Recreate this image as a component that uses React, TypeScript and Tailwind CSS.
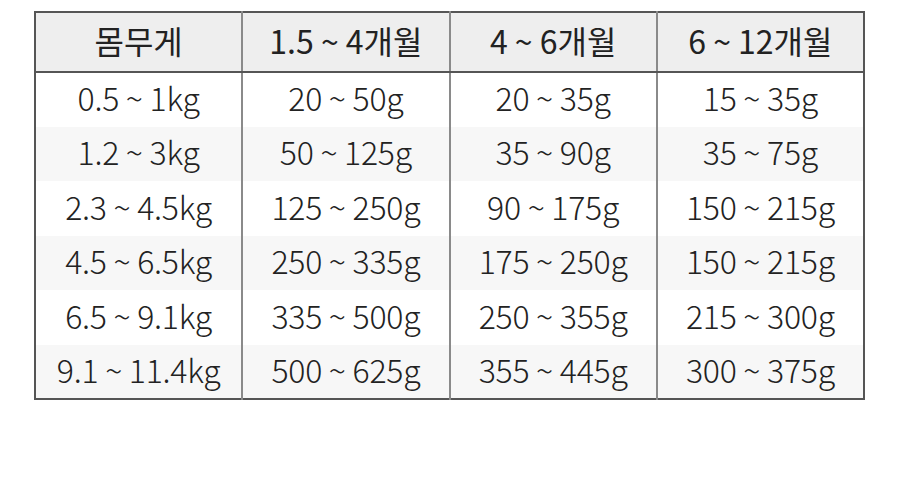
import React from "react";

const headers = ["몸무게", "1.5 ~ 4개월", "4 ~ 6개월", "6 ~ 12개월"];

const rows: string[][] = [
  ["0.5 ~ 1kg", "20 ~ 50g", "20 ~ 35g", "15 ~ 35g"],
  ["1.2 ~ 3kg", "50 ~ 125g", "35 ~ 90g", "35 ~ 75g"],
  ["2.3 ~ 4.5kg", "125 ~ 250g", "90 ~ 175g", "150 ~ 215g"],
  ["4.5 ~ 6.5kg", "250 ~ 335g", "175 ~ 250g", "150 ~ 215g"],
  ["6.5 ~ 9.1kg", "335 ~ 500g", "250 ~ 355g", "215 ~ 300g"],
  ["9.1 ~ 11.4kg", "500 ~ 625g", "355 ~ 445g", "300 ~ 375g"],
];

export default function App() {
  return (
    <div
      className="w-[900px] h-[484px] bg-white pt-[11px] pl-[34px]"
      style={{ fontFamily: '"Noto Sans CJK KR", "Noto Sans", sans-serif' }}
    >
      <table className="w-[831px] border-collapse border-2 border-[#555555] text-[#222222] table-fixed">
        <thead>
          <tr className="bg-[#eeeeee] h-[60px]">
            {headers.map((h, i) => (
              <th
                key={h}
                className={`text-[32px] leading-none font-normal text-center pb-[5px] border-b-2 border-[#555555] ${
                  i > 0 ? "border-l-2 border-l-[#8a8a8a]" : ""
                }`}
              >
                {h}
              </th>
            ))}
          </tr>
        </thead>
        <tbody>
          {rows.map((r, ri) => (
            <tr key={ri} className={`h-[54.5px] ${ri % 2 === 1 ? "bg-[#f7f7f7]" : "bg-white"}`}>
              {r.map((c, ci) => (
                <td
                  key={ci}
                  className={`text-[32px] leading-none font-light text-center pb-[5px] tracking-[-0.25px] ${
                    ci > 0 ? "border-l-2 border-l-[#8a8a8a]" : ""
                  }`}
                >
                  {c}
                </td>
              ))}
            </tr>
          ))}
        </tbody>
      </table>
    </div>
  );
}
